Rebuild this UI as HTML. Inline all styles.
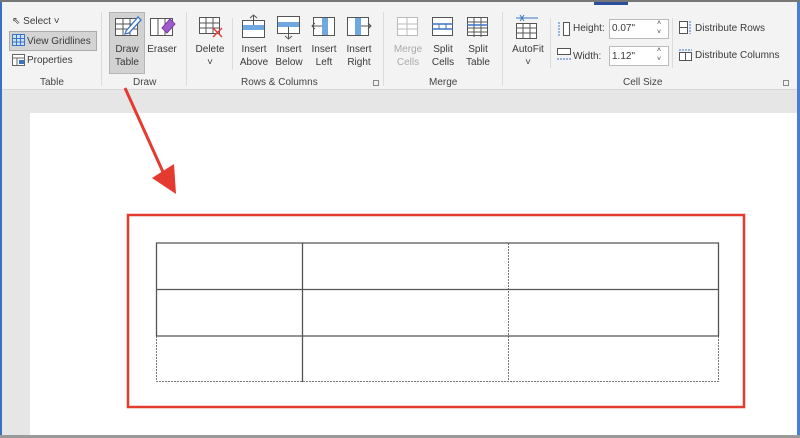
<!DOCTYPE html>
<html><head><style>
body{margin:0;width:800px;height:438px;overflow:hidden;background:#e6e6e6;font-family:"Liberation Sans",sans-serif;font-size:10px;color:#333;position:relative}
.a{position:absolute}
.rib{left:0;top:0;width:800px;height:89px;background:#f3f3f3;border-bottom:1px solid #d6d6d6}
.t{position:absolute;text-align:center;line-height:13px;font-size:10px;color:#3a3a3a}
.g{position:absolute;top:77px;font-size:10px;color:#444}
.sep{position:absolute;top:12px;width:1px;height:74px;background:#dcdcdc}
</style></head><body>
<div class="a rib"></div>
<div class="a" style="left:0;top:0;width:2px;height:438px;background:#3b6fc4"></div>
<div class="a" style="left:797px;top:0;width:3px;height:438px;background:#4a7fd0"></div>
<div class="a" style="left:0;top:0;width:800px;height:2px;background:#777"></div>
<div class="a" style="left:594px;top:2px;width:34px;height:3px;background:#2b4f9c"></div>

<!-- Table group -->
<div class="t" style="left:12px;top:15px;text-align:left">⇖ Select ˅</div>
<div class="a" style="left:9px;top:31px;width:86px;height:18px;background:#d4d4d4;border:1px solid #aaa"></div>
<svg class="a" style="left:12px;top:34px" width="13" height="12"><rect x=".5" y=".5" width="12" height="11" fill="#cfe0f5" stroke="#3c74c4"/><path d="M4.5 0v12M8.5 0v12M0 4.5h13M0 8h13" stroke="#3c74c4"/></svg>
<div class="t" style="left:27px;top:35px;text-align:left">View Gridlines</div>
<svg class="a" style="left:12px;top:54px" width="13" height="12"><rect x=".5" y=".5" width="12" height="11" fill="#fff" stroke="#666"/><path d="M0 4h13M5 4v8" stroke="#666"/><rect x="7" y="6" width="5" height="4" fill="#3c74c4"/></svg>
<div class="t" style="left:27px;top:54px;text-align:left">Properties</div>
<div class="g" style="left:40px">Table</div>
<div class="sep" style="left:101px"></div>

<!-- Draw -->
<div class="a" style="left:109px;top:12px;width:34px;height:60px;background:#d2d2d2;border:1px solid #b5b5b5"></div>
<svg class="a" style="left:114px;top:14px" width="28" height="24"><rect x="1.5" y="4.5" width="22" height="17" fill="#fff" stroke="#555"/><path d="M1 10h23M1 15h23M9 4v18M16 4v18" stroke="#555"/><path d="M12 17l12-14 3 3-12 13-4 1z" fill="#fff" stroke="#3c74c4" stroke-width="1.3"/></svg>
<div class="t" style="left:109px;top:43px;width:36px">Draw<br>Table</div>
<svg class="a" style="left:149px;top:14px" width="28" height="24"><rect x="1.5" y="4.5" width="22" height="17" fill="#fff" stroke="#555"/><path d="M9 4v18M16 4v18" stroke="#555"/><path d="M13 14l8-9 5 5-8 9z" fill="#a05cc8" stroke="#7a3aa6"/></svg>
<div class="t" style="left:146px;top:43px;width:32px">Eraser</div>
<div class="g" style="left:133px">Draw</div>
<div class="sep" style="left:186px"></div>

<!-- Rows & Columns -->
<svg class="a" style="left:198px;top:16px" width="26" height="22"><rect x="1.5" y="1.5" width="20" height="16" fill="#fff" stroke="#555"/><path d="M1 7h21M1 12h21M8 1v17M15 1v17" stroke="#555"/><path d="M15 12l9 9M24 12l-9 9" stroke="#e0403a" stroke-width="1.5"/></svg>
<div class="t" style="left:192px;top:43px;width:36px">Delete<br>˅</div>
<div class="sep" style="left:232px;top:18px;height:52px"></div>
<svg class="a" style="left:241px;top:14px" width="26" height="26"><rect x="1.5" y="6.5" width="22" height="17" fill="#fff" stroke="#555"/><rect x="2" y="11" width="21" height="5" fill="#6fa8e0"/><path d="M12.5 1v10M9 4l3.5-3 3.5 3" stroke="#555" fill="none"/></svg>
<div class="t" style="left:236px;top:43px;width:36px">Insert<br>Above</div>
<svg class="a" style="left:276px;top:14px" width="26" height="26"><rect x="1.5" y="2.5" width="22" height="17" fill="#fff" stroke="#555"/><rect x="2" y="8" width="21" height="5" fill="#6fa8e0"/><path d="M12.5 13v12M9 22l3.5 3 3.5-3" stroke="#555" fill="none"/></svg>
<div class="t" style="left:271px;top:43px;width:36px">Insert<br>Below</div>
<svg class="a" style="left:311px;top:14px" width="26" height="26"><rect x="2.5" y="3.5" width="21" height="18" fill="#fff" stroke="#555"/><rect x="11" y="4" width="6" height="17" fill="#6fa8e0"/><path d="M1 12h10M4 9l-3 3 3 3" stroke="#555" fill="none"/></svg>
<div class="t" style="left:306px;top:43px;width:36px">Insert<br>Left</div>
<svg class="a" style="left:346px;top:14px" width="26" height="26"><rect x="1.5" y="3.5" width="21" height="18" fill="#fff" stroke="#555"/><rect x="9" y="4" width="6" height="17" fill="#6fa8e0"/><path d="M15 12h10M22 9l3 3-3 3" stroke="#555" fill="none"/></svg>
<div class="t" style="left:341px;top:43px;width:36px">Insert<br>Right</div>
<div class="g" style="left:241px">Rows &amp; Columns</div>
<div class="a" style="left:373px;top:80px;width:6px;height:6px;border:1px solid #888;box-sizing:border-box"></div>
<div class="sep" style="left:383px"></div>

<!-- Merge -->
<svg class="a" style="left:396px;top:16px" width="24" height="22"><rect x="1.5" y="1.5" width="20" height="18" fill="#fff" stroke="#bbb"/><path d="M1 8h21M1 13h21M11 1v18" stroke="#bbb"/></svg>
<div class="t" style="left:390px;top:43px;width:36px;color:#aaa">Merge<br>Cells</div>
<svg class="a" style="left:431px;top:16px" width="24" height="22"><rect x="1.5" y="1.5" width="20" height="18" fill="#fff" stroke="#555"/><path d="M1 8h21M1 13h21" stroke="#3c74c4" stroke-width="1.5"/><path d="M8 8v5M15 8v5" stroke="#3c74c4"/></svg>
<div class="t" style="left:425px;top:43px;width:36px">Split<br>Cells</div>
<svg class="a" style="left:466px;top:16px" width="24" height="22"><rect x="1.5" y="1.5" width="20" height="18" fill="#fff" stroke="#555"/><path d="M1 6h21M1 12h21M1 16h21M8 1v20M15 1v20" stroke="#555"/><path d="M1 9h21" stroke="#3c74c4" stroke-width="1.5"/></svg>
<div class="t" style="left:460px;top:43px;width:36px">Split<br>Table</div>
<div class="g" style="left:429px">Merge</div>
<div class="sep" style="left:502px"></div>

<!-- Cell size -->
<svg class="a" style="left:514px;top:14px" width="26" height="26"><path d="M2 4h22M6 1l4 6M10 1l-4 6" stroke="#3c74c4"/><rect x="2.5" y="9.5" width="20" height="15" fill="#fff" stroke="#555"/><path d="M2 14h21M2 19h21M9 9v16M16 9v16" stroke="#555"/></svg>
<div class="t" style="left:508px;top:43px;width:40px">AutoFit<br>˅</div>
<div class="sep" style="left:550px;top:18px;height:50px"></div>
<svg class="a" style="left:557px;top:21px" width="14" height="16"><path d="M2 1v14" stroke="#3c74c4" stroke-dasharray="2 1"/><rect x="6.5" y="1.5" width="6" height="13" fill="#fff" stroke="#555"/></svg>
<div class="t" style="left:573px;top:22px;text-align:left">Height:</div>
<div class="a" style="left:609px;top:19px;width:58px;height:18px;background:#fff;border:1px solid #bbb"></div>
<div class="t" style="left:612px;top:22px;text-align:left">0.07"</div>
<div class="t" style="left:657px;top:19px;font-size:7px;line-height:9px">˄<br>˅</div>
<svg class="a" style="left:556px;top:47px" width="16" height="16"><rect x="1.5" y="1.5" width="13" height="6" fill="#fff" stroke="#555"/><path d="M1 12h14" stroke="#3c74c4" stroke-dasharray="2 1"/></svg>
<div class="t" style="left:573px;top:50px;text-align:left">Width:</div>
<div class="a" style="left:609px;top:46px;width:58px;height:18px;background:#fff;border:1px solid #bbb"></div>
<div class="t" style="left:612px;top:50px;text-align:left">1.12"</div>
<div class="t" style="left:657px;top:46px;font-size:7px;line-height:9px">˄<br>˅</div>
<div class="sep" style="left:672px;top:18px;height:50px"></div>
<svg class="a" style="left:679px;top:21px" width="14" height="14"><rect x=".5" y=".5" width="8" height="12" fill="#fff" stroke="#555"/><path d="M0 6.5h9" stroke="#555"/><path d="M11 0v13" stroke="#3c74c4" stroke-dasharray="2 1"/></svg>
<div class="t" style="left:695px;top:22px;text-align:left">Distribute Rows</div>
<svg class="a" style="left:679px;top:48px" width="14" height="14"><path d="M0 2h13" stroke="#3c74c4" stroke-dasharray="2 1"/><rect x=".5" y="4.5" width="12" height="8" fill="#fff" stroke="#555"/><path d="M6.5 4v9" stroke="#555"/></svg>
<div class="t" style="left:695px;top:49px;text-align:left">Distribute Columns</div>
<div class="g" style="left:623px">Cell Size</div>
<div class="a" style="left:783px;top:80px;width:6px;height:6px;border:1px solid #888;box-sizing:border-box"></div>

<!-- page -->
<div class="a" style="left:30px;top:113px;width:767px;height:322px;background:#fff"></div>
<div class="a" style="left:0;top:435px;width:800px;height:3px;background:#9a9a9a"></div>

<svg class="a" style="left:0;top:0" width="800" height="438">
<path d="M125 88L163 172" stroke="#e53a2f" stroke-width="3"/>
<path d="M152 178L176 194 174 164z" fill="#e53a2f"/>
<rect x="128" y="215" width="616" height="192" fill="none" stroke="#e53a2f" stroke-width="2.5"/>
<g stroke="#777" stroke-width="1" stroke-dasharray="2 1" fill="none">
<path d="M156.5 336v45.5h562V336M508.5 243v138"/>
</g>
<g stroke="#555" stroke-width="1.3" fill="none">
<path d="M156.5 336V243h562v93M156 289.5h563M156 336h563M302.5 243v139"/>
</g>
</svg>
</body></html>
